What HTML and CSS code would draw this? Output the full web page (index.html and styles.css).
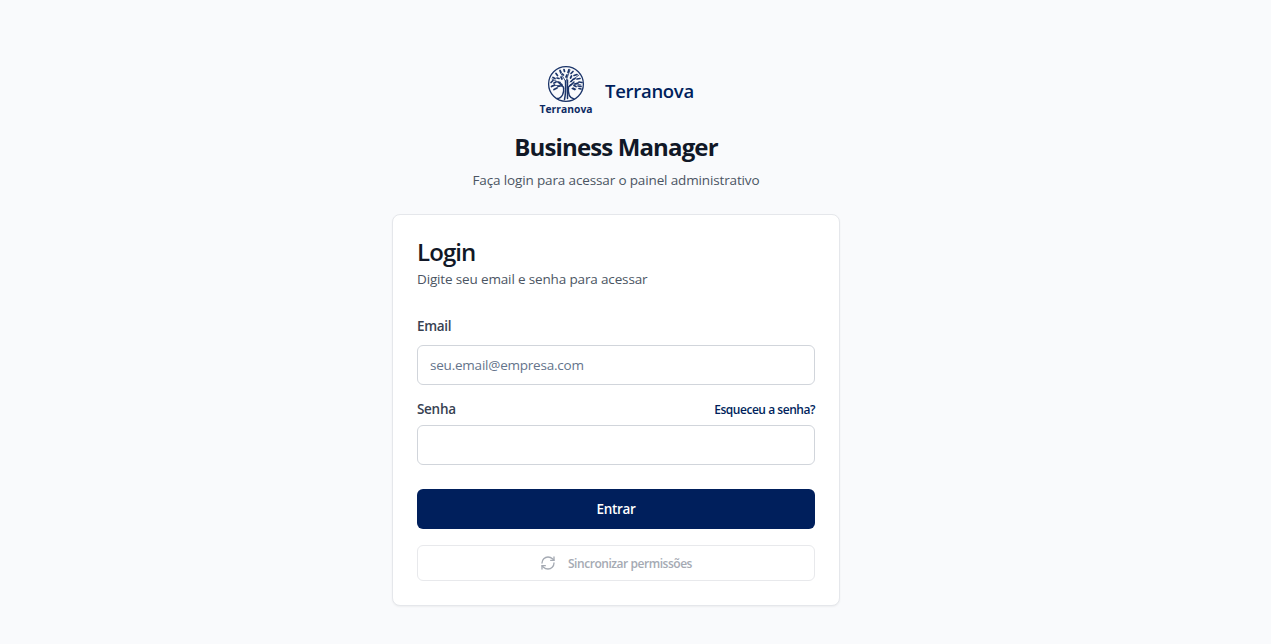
FILE: index.html
```html
<!DOCTYPE html>
<html lang="pt-BR">
<head>
<meta charset="utf-8">
<title>Business Manager</title>
<link rel="stylesheet" href="styles.css">
</head>
<body>
<main class="page">
  <header class="header">
    <div class="brand">
      <svg class="logo" viewBox="0 0 56 50" width="56" height="50" role="img" aria-label="Terranova">
        <g fill="none" stroke="#1b3469" stroke-linecap="round">
          <circle cx="28" cy="19" r="17.400" stroke-width="1.300"/>
          <path stroke-width="1.400" d="M19 33.500C24 33.500 26.500 28 25.500 22L21 18M36 34C31.500 33 29.800 28 30.500 22L36 17"/>
          <path stroke-width="1.500" d="M26.500 34.500Q28 28 27.500 16M29.500 33.500V15"/>
          <path stroke-width=".8" d="M26 23q-3-4-12-2M31 21q3-4 12-1M28 17l-6-10M28 16l4-11M24 19l-10-5M32 17l9-7"/>
          <path stroke-width="1.700" d="M13 17.500l2-2M15 12.500l2 1M18 8.500l1.500 2M22 5.500l1 2M26 4.500l.5 2M31 4.500l-1 3M35 6.500l-2 2M39 9.500l-3 1M42 13.500l-3 .5M44 17.500l-3-.5M13.500 21.500l3-1.500M16 24.500l3-1.500M20 21.500l2-.5M18 17l-2 1M21 13.500l-2-.5M24 14l-1-2M25.500 10l-1-1M29 10l-1 2M33.500 11l-1 2M37 13.500l-2 1M40 18l-3 1M43 21.500l-3-.5M36 20.500l2 1M33 16.500l1-1M20 17l2 .5M23 19.500l1 .5M33 20l-1 .5M41 23.500l2 .5"/>
        </g>
        <path fill="#1b3469" d="M33.200 23.800l1.800-1.600 3.400 1.800-1.500 1.400z"/>
        <text class="logo-text" x="1.500" y="47.500" textLength="53" lengthAdjust="spacingAndGlyphs">Terranova</text>
      </svg>
      <span class="brand-name">Terranova</span>
    </div>
    <h1 class="title">Business Manager</h1>
    <p class="subtitle">Faça login para acessar o painel administrativo</p>
  </header>
  <section class="card">
    <h2 class="card-title">Login</h2>
    <p class="card-description">Digite seu email e senha para acessar</p>
    <form class="form">
      <label class="label" for="email">Email</label>
      <input class="input" id="email" type="email" placeholder="seu.email@empresa.com">
      <div class="password-row">
        <label class="label" for="senha">Senha</label>
        <a class="forgot" href="#">Esqueceu a senha?</a>
      </div>
      <input class="input" id="senha" type="password">
      <button class="submit" type="button"><span>Entrar</span></button>
      <button class="sync" type="button" disabled>
        <svg class="sync-icon" viewBox="0 0 24 24" width="16" height="16" fill="none" stroke="currentColor" stroke-width="2" stroke-linecap="round" stroke-linejoin="round"><path d="M3 12a9 9 0 0 1 9-9 9.750 9.750 0 0 1 6.740 2.740L21 8"/><path d="M21 3v5h-5"/><path d="M21 12a9 9 0 0 1-9 9 9.750 9.750 0 0 1-6.740-2.740L3 16"/><path d="M8 16H3v5"/></svg>
        <span>Sincronizar permissões</span>
      </button>
    </form>
  </section>
</main>
</body>
</html>
```
FILE: styles.css
```css
* { box-sizing: border-box; }
body {
  margin: 0;
  background: #f9fafc;
  font-family: "Segoe UI", "Open Sans", "Noto Sans", sans-serif;
  color: #111827;
}
h1, h2, p { margin: 0; font-weight: 400; }
.page {
  width: 448px;
  height: 644px;
  margin-left: 392px;
  padding-top: 65px;
}
.header { display: flex; flex-direction: column; align-items: center; height: 149px; }
.brand { display: flex; align-items: center; gap: 11px; height: 50px; }
.logo { display: block; overflow: visible; }
.logo-text { font-size: 11px; font-weight: 700; fill: #0d2a63; }
.brand-name { padding-top: 2px; font-size: 18.500px; line-height: 28px; font-weight: 600; letter-spacing: -.3px; color: #001f5c; }
.title { margin-top: 16px; font-size: 24px; line-height: 32px; font-weight: 700; letter-spacing: -.87px; white-space: nowrap; }
.subtitle { margin-top: 7px; font-size: 13.500px; line-height: 20px; color: #4b5563; letter-spacing: -.14px; white-space: nowrap; }
.card {
  height: 392px;
  padding: 24px;
  background: #fff;
  border: 1px solid #e5e7eb;
  border-radius: 8px;
  box-shadow: 0 1px 2px rgba(0, 0, 0, .05);
}
.card-title { height: 28px; font-size: 24px; line-height: 26px; font-weight: 600; letter-spacing: -.9px; }
.card-description { margin-top: 2px; font-size: 13.500px; line-height: 20px; letter-spacing: -.15px; color: #4b5563; }
.form { display: flex; flex-direction: column; margin-top: 27px; }
.label { font-size: 13.500px; line-height: 20px; font-weight: 600; letter-spacing: -.3px; color: #374151; }
.input {
  width: 100%;
  height: 40px;
  padding: 0 12px;
  border: 1px solid #d1d5db;
  border-radius: 6px;
  background: #fff;
  font: 400 13.500px "Segoe UI", "Open Sans", "Noto Sans", sans-serif;
  letter-spacing: -.22px;
}
.label + .input { margin-top: 9px; }
.input::placeholder { color: #64748b; opacity: 1; }
.password-row { display: flex; align-items: center; justify-content: space-between; height: 20px; margin: 14px 0 6px; }
.forgot { padding-top: 2px; font-size: 12px; line-height: 16px; font-weight: 600; letter-spacing: -.46px; color: #001f5c; text-decoration: none; }
.submit, .sync {
  display: flex;
  align-items: center;
  justify-content: center;
  border-radius: 6px;
  font-family: inherit;
  font-weight: 600;
}
.submit { height: 40px; margin-top: 24px; padding-bottom: 2px; border: 0; background: #001f5c; color: #fff; font-size: 13.500px; letter-spacing: -.35px; }
.sync { height: 36px; margin-top: 16px; gap: 12px; border: 1px solid #e8e9ec; background: #fff; color: #a5aab3; font-size: 12px; letter-spacing: -.46px; }
```
